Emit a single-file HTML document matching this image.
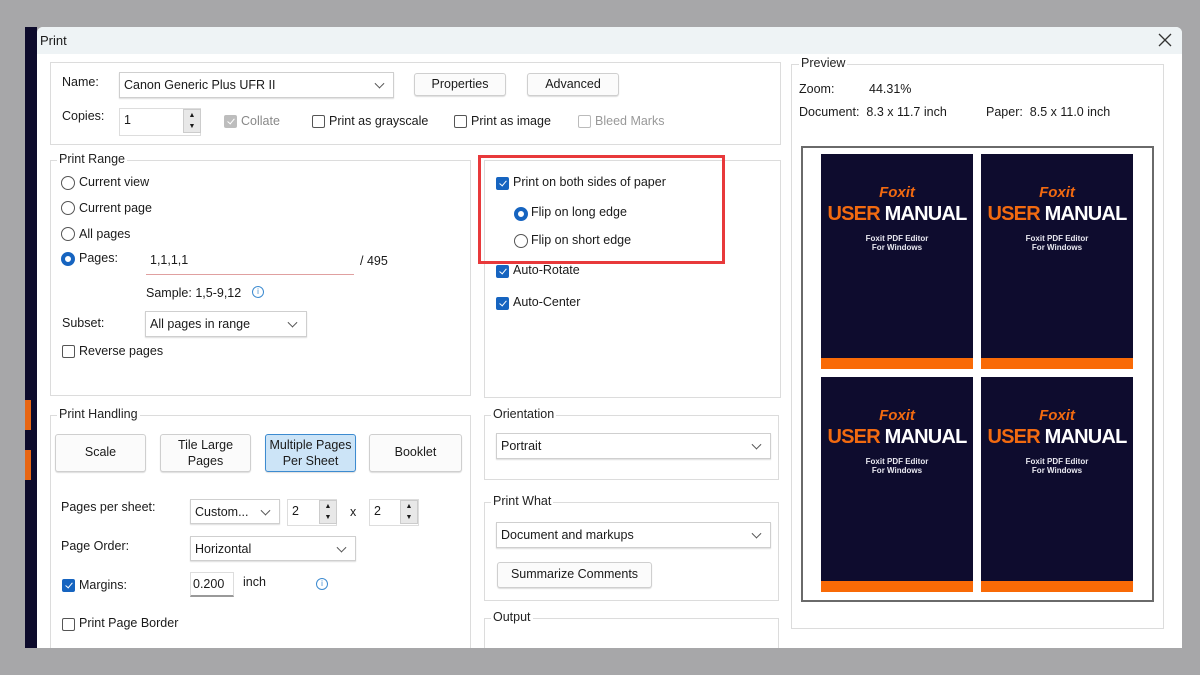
<!DOCTYPE html>
<html><head><meta charset="utf-8"><style>
*{box-sizing:border-box;margin:0;padding:0}
body{width:1200px;height:675px;background:#a7a7a9;position:relative;overflow:hidden;font-family:"Segoe UI","Liberation Sans",sans-serif;font-size:12.5px;color:#1a1a1a}
.a{position:absolute}
.grp{position:absolute;border:1px solid #dcdcdc}
.lg{position:absolute;background:#fff;padding:0 2px;font-size:12.5px;color:#222}
.btn{position:absolute;border:1px solid #cfcfcf;border-radius:3px;background:#fbfbfb;text-align:center;box-shadow:0 1px 1px #ddd}
.sel{position:absolute;border:1px solid #cfcfcf;background:#fff;padding:5px 4px;box-shadow:0 1px 1px #ddd}
.sel:after{content:"";position:absolute;right:10px;top:50%;width:6px;height:6px;border-right:1px solid #555;border-bottom:1px solid #555;transform:translateY(-70%) rotate(45deg)}
.cb{position:absolute;width:13px;height:13px;border:1px solid #555;border-radius:2px;background:#fff}
.cb.on{background:#1664c0;border-color:#1664c0}
.cb.on:after{content:"";position:absolute;left:3.5px;top:1px;width:3px;height:6px;border-right:1.5px solid #fff;border-bottom:1.5px solid #fff;transform:rotate(40deg)}
.rb{position:absolute;width:14px;height:14px;border:1px solid #555;border-radius:50%;background:#fff}
.rb.on{border:4px solid #1664c0}
.pg{position:absolute;width:152px;height:215px;background:#0e0c2e;text-align:center;font-family:"Liberation Sans",sans-serif}
.pg .f{position:absolute;top:30px;left:0;width:100%;color:#f26a10;font-weight:bold;font-style:italic;font-size:15px}
.pg .u{position:absolute;top:49px;left:0;width:100%;font-weight:bold;font-size:20px;color:#fff;letter-spacing:-0.8px}
.pg .u b{color:#f26a10}
.pg .s{position:absolute;top:80px;left:0;width:100%;color:#e8e8f0;font-size:8px;font-weight:bold;line-height:9px}
.pg .o{position:absolute;bottom:0;left:0;width:100%;height:11px;background:#f96a06}
</style></head><body>
<div class="a" style="left:25px;top:27px;width:12px;height:621px;background:#0d0b2c"></div>
<div class="a" style="left:25px;top:400px;width:6px;height:30px;background:#e86612"></div>
<div class="a" style="left:25px;top:450px;width:6px;height:30px;background:#e86612"></div>
<div class="a" style="left:37px;top:27px;width:1145px;height:621px;background:#fff;border-radius:6px 6px 0 0;overflow:hidden">
 <div class="a" style="left:0;top:0;width:1145px;height:27px;background:#eef3f5"></div>
 <div class="a" style="left:3px;top:6px;font-size:13px">Print</div>
 <svg class="a" style="left:1121px;top:6px" width="14" height="14" viewBox="0 0 14 14"><path d="M1 1L13 13M13 1L1 13" stroke="#333" stroke-width="1.3"/></svg>
</div>
<!-- Name group -->
<div class="grp" style="left:50px;top:62px;width:731px;height:83px"></div>
<div class="a" style="left:62px;top:75px">Name:</div>
<div class="sel" style="left:119px;top:72px;width:275px;height:26px">Canon Generic Plus UFR II</div>
<div class="btn" style="left:414px;top:73px;width:92px;height:23px;padding-top:3px">Properties</div>
<div class="btn" style="left:527px;top:73px;width:92px;height:23px;padding-top:3px">Advanced</div>
<div class="a" style="left:62px;top:109px">Copies:</div>
<div class="a" style="left:119px;top:108px;width:82px;height:28px;border:1px solid #ddd;padding:4px 4px;background:#fff">1</div>
<div class="a" style="left:183px;top:109px;width:18px;height:24px;background:#e8e8e8;border:1px solid #ccc;font-size:7px;text-align:center;line-height:11px">▲<br>▼</div>
<div class="cb on" style="left:224px;top:115px;background:#bdbdbd;border-color:#bdbdbd"></div><div class="a" style="left:241px;top:114px;color:#888">Collate</div>
<div class="cb" style="left:312px;top:115px"></div><div class="a" style="left:329px;top:114px">Print as grayscale</div>
<div class="cb" style="left:454px;top:115px"></div><div class="a" style="left:471px;top:114px">Print as image</div>
<div class="cb" style="left:578px;top:115px;border-color:#bbb"></div><div class="a" style="left:595px;top:114px;color:#999">Bleed Marks</div>
<!-- Print range -->
<div class="grp" style="left:50px;top:160px;width:421px;height:236px"></div>
<div class="lg" style="left:57px;top:152px">Print Range</div>
<div class="rb" style="left:61px;top:176px"></div><div class="a" style="left:79px;top:175px">Current view</div>
<div class="rb" style="left:61px;top:201px"></div><div class="a" style="left:79px;top:201px">Current page</div>
<div class="rb" style="left:61px;top:227px"></div><div class="a" style="left:79px;top:227px">All pages</div>
<div class="rb on" style="left:61px;top:252px"></div><div class="a" style="left:79px;top:251px">Pages:</div>
<div class="a" style="left:146px;top:248px;width:208px;height:27px;border-bottom:1px solid #e0a0a0;padding:5px 4px;background:#fff">1,1,1,1</div>
<div class="a" style="left:360px;top:254px">/ 495</div>
<div class="a" style="left:146px;top:286px">Sample: 1,5-9,12</div>
<div class="a" style="left:252px;top:286px;width:12px;height:12px;border:1px solid #3d8bd0;border-radius:50%;color:#3d8bd0;font-size:8px;text-align:center;line-height:10px">i</div>
<div class="a" style="left:62px;top:316px">Subset:</div>
<div class="sel" style="left:145px;top:311px;width:162px;height:26px">All pages in range</div>
<div class="cb" style="left:62px;top:345px"></div><div class="a" style="left:79px;top:344px">Reverse pages</div>
<!-- duplex -->
<div class="grp" style="left:484px;top:160px;width:297px;height:238px"></div>
<div class="a" style="left:478px;top:155px;width:247px;height:109px;border:3px solid #e8393b"></div>
<div class="cb on" style="left:496px;top:177px"></div><div class="a" style="left:513px;top:175px">Print on both sides of paper</div>
<div class="rb on" style="left:514px;top:207px"></div><div class="a" style="left:531px;top:205px">Flip on long edge</div>
<div class="rb" style="left:514px;top:234px"></div><div class="a" style="left:531px;top:233px">Flip on short edge</div>
<div class="cb on" style="left:496px;top:265px"></div><div class="a" style="left:513px;top:263px">Auto-Rotate</div>
<div class="cb on" style="left:496px;top:297px"></div><div class="a" style="left:513px;top:295px">Auto-Center</div>
<!-- handling -->
<div class="grp" style="left:50px;top:415px;width:421px;height:240px"></div>
<div class="lg" style="left:57px;top:407px">Print Handling</div>
<div class="btn" style="left:55px;top:434px;width:91px;height:38px;padding-top:10px">Scale</div>
<div class="btn" style="left:160px;top:434px;width:91px;height:38px;padding-top:2px;line-height:16px">Tile Large<br>Pages</div>
<div class="btn" style="left:265px;top:434px;width:91px;height:38px;padding-top:2px;line-height:16px;background:#cce4f7;border-color:#3d8bd0">Multiple Pages<br>Per Sheet</div>
<div class="btn" style="left:369px;top:434px;width:93px;height:38px;padding-top:10px">Booklet</div>
<div class="a" style="left:61px;top:500px">Pages per sheet:</div>
<div class="sel" style="left:190px;top:499px;width:90px;height:25px">Custom...</div>
<div class="a" style="left:287px;top:499px;width:50px;height:27px;border:1px solid #ddd;padding:4px 4px">2</div>
<div class="a" style="left:319px;top:500px;width:18px;height:24px;background:#e8e8e8;border:1px solid #ccc;font-size:7px;text-align:center;line-height:11px">▲<br>▼</div>
<div class="a" style="left:350px;top:505px">x</div>
<div class="a" style="left:369px;top:499px;width:50px;height:27px;border:1px solid #ddd;padding:4px 4px">2</div>
<div class="a" style="left:400px;top:500px;width:18px;height:24px;background:#e8e8e8;border:1px solid #ccc;font-size:7px;text-align:center;line-height:11px">▲<br>▼</div>
<div class="a" style="left:61px;top:539px">Page Order:</div>
<div class="sel" style="left:190px;top:536px;width:166px;height:25px">Horizontal</div>
<div class="cb on" style="left:62px;top:579px"></div><div class="a" style="left:79px;top:578px">Margins:</div>
<div class="a" style="left:190px;top:572px;width:44px;height:25px;border:1px solid #ddd;border-bottom:2px solid #999;padding:4px 2px">0.200</div>
<div class="a" style="left:243px;top:575px">inch</div>
<div class="a" style="left:316px;top:578px;width:12px;height:12px;border:1px solid #3d8bd0;border-radius:50%;color:#3d8bd0;font-size:8px;text-align:center;line-height:10px">i</div>
<div class="cb" style="left:62px;top:618px"></div><div class="a" style="left:79px;top:616px">Print Page Border</div>
<!-- orientation etc -->
<div class="grp" style="left:484px;top:415px;width:295px;height:65px"></div>
<div class="lg" style="left:491px;top:407px">Orientation</div>
<div class="sel" style="left:496px;top:433px;width:275px;height:26px">Portrait</div>
<div class="grp" style="left:484px;top:502px;width:295px;height:99px"></div>
<div class="lg" style="left:491px;top:494px">Print What</div>
<div class="sel" style="left:496px;top:522px;width:275px;height:26px">Document and markups</div>
<div class="btn" style="left:497px;top:562px;width:155px;height:26px;padding-top:4px">Summarize Comments</div>
<div class="grp" style="left:484px;top:618px;width:295px;height:40px"></div>
<div class="lg" style="left:491px;top:610px">Output</div>
<!-- preview -->
<div class="grp" style="left:791px;top:64px;width:373px;height:565px"></div>
<div class="lg" style="left:799px;top:56px">Preview</div>
<div class="a" style="left:799px;top:82px">Zoom:</div><div class="a" style="left:869px;top:82px">44.31%</div>
<div class="a" style="left:799px;top:105px">Document:&nbsp; 8.3 x 11.7 inch</div>
<div class="a" style="left:986px;top:105px">Paper:&nbsp; 8.5 x 11.0 inch</div>
<div class="a" style="left:801px;top:146px;width:353px;height:456px;border:2px solid #6a6a6a;background:#fff"></div>
<div class="pg" style="left:821px;top:154px"><div class="f">Foxit</div><div class="u"><b>USER</b> MANUAL</div><div class="s">Foxit PDF Editor<br>For Windows</div><div class="o"></div></div>
<div class="pg" style="left:981px;top:154px"><div class="f">Foxit</div><div class="u"><b>USER</b> MANUAL</div><div class="s">Foxit PDF Editor<br>For Windows</div><div class="o"></div></div>
<div class="pg" style="left:821px;top:377px"><div class="f">Foxit</div><div class="u"><b>USER</b> MANUAL</div><div class="s">Foxit PDF Editor<br>For Windows</div><div class="o"></div></div>
<div class="pg" style="left:981px;top:377px"><div class="f">Foxit</div><div class="u"><b>USER</b> MANUAL</div><div class="s">Foxit PDF Editor<br>For Windows</div><div class="o"></div></div>
<div class="a" style="left:0;top:648px;width:1200px;height:27px;background:#a7a7a9"></div>
</body></html>
